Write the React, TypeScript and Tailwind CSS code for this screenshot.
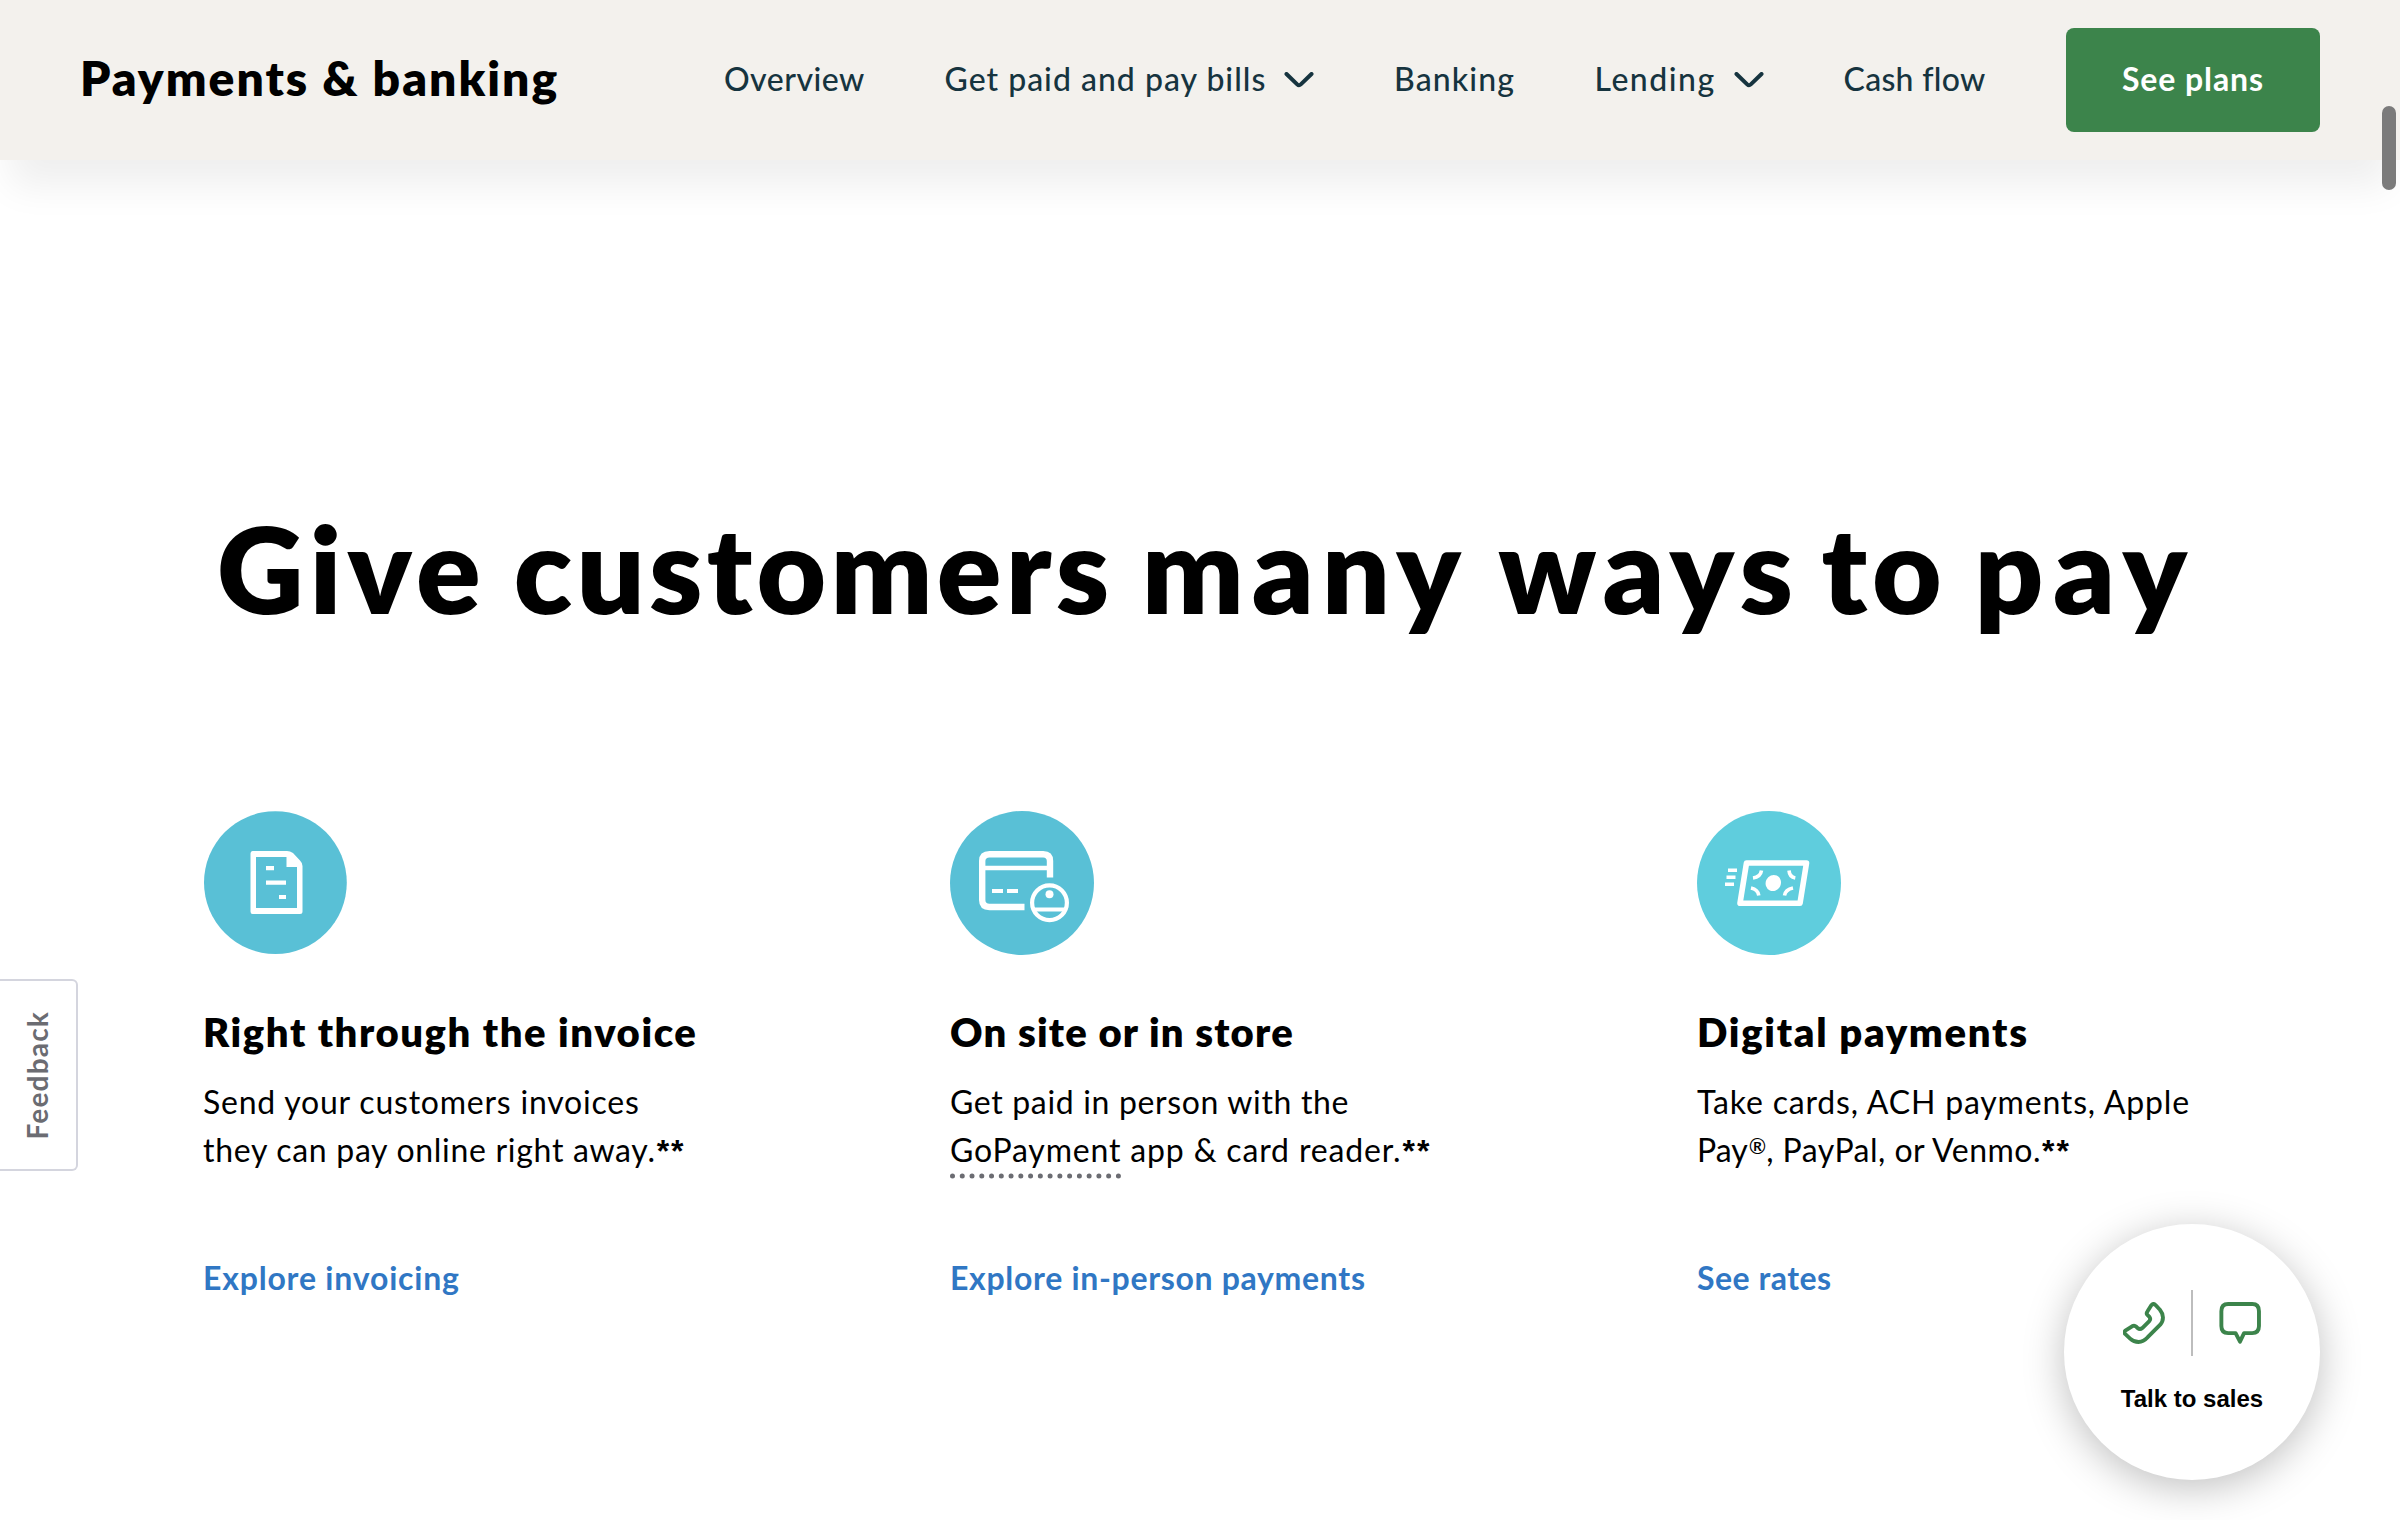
import type { ReactNode } from 'react';

function Chevron() {
  return (
    <svg className="ml-auto mt-[3px] h-4 w-[30px]" viewBox="0 0 30 16" fill="none" stroke="#16343f" strokeWidth="4" strokeLinecap="round" strokeLinejoin="round">
      <path d="M2.500 2 L13.200 12.400 Q15 14.100 16.800 12.400 L27.500 2" />
    </svg>
  );
}

function InvoiceIcon() {
  return (
    <svg className="h-36 w-36" viewBox="0 0 144 144">
      <circle cx="72.4" cy="71.6" r="71.4" fill="#59c0d6" />
      <path fill="#fff" fillRule="evenodd" d="M49 40 H84 Q87 40 90 42 L97 49.5 Q99.5 52 99.5 55 V100.500 Q99.500 103 97 103 H49.500 Q47.500 103 47.500 100.500 V42.500 Q47.500 40 49.500 40 Z M53 46 V97 H94 V56 H83.500 V46 Z" />
      <path fill="#fff" d="M63 55h8v4.200h-8z M63 69.500h20v4.200H63z M76 84h7v4h-7z" />
    </svg>
  );
}

function CardReaderIcon() {
  return (
    <svg className="h-36 w-36" viewBox="0 0 144 144" fill="none" stroke="#fff">
      <circle cx="72" cy="72" r="72" fill="#59c0d6" stroke="none" />
      <path strokeWidth="6.400" d="M100 66.500 V50 Q100 43.200 93.200 43.200 H39.500 Q32.200 43.200 32.200 50 V89 Q32.200 96 39.500 96 H74.500" />
      <path strokeWidth="4.600" d="M32 57 H98" />
      <path strokeWidth="4.200" d="M42 80 H53 M57 80 H68" />
      <circle cx="99.500" cy="91.700" r="17.400" strokeWidth="4.200" />
      <path strokeWidth="4" d="M83.500 98.500 H115.500" />
      <circle cx="99.500" cy="83.300" r="4" fill="#fff" stroke="none" />
    </svg>
  );
}

function CashIcon() {
  return (
    <svg className="h-36 w-36" viewBox="0 0 144 144" fill="none" stroke="#fff">
      <circle cx="72" cy="72" r="72" fill="#5fcddd" stroke="none" />
      <path strokeWidth="5.600" strokeLinejoin="round" d="M49.500 52 H109.500 L103 92.300 H43 Z" />
      <ellipse cx="76.300" cy="72" rx="7.600" ry="8.200" fill="#fff" stroke="none" transform="rotate(25 76.300 72)" />
      <path strokeWidth="3.600" d="M64.500 59.500 Q63.500 66 56 67 M92 59.500 Q92.500 66 98.300 67 M54 77 Q61 78.500 61.800 84.500 M96 77 Q88.500 78.500 87.500 84.500" />
      <path strokeWidth="3.600" d="M31 59.300 H40 M29.500 66.300 H38.500 M28 73.300 H37" />
    </svg>
  );
}

function Stars() {
  return <span className="ml-px font-['Liberation_Sans',sans-serif] text-[32px] leading-none font-bold tracking-[2px]">**</span>;
}

function Card({ icon, title, link, children }: { icon: ReactNode; title: ReactNode; link: ReactNode; children: ReactNode }) {
  return (
    <section className="flex w-[747px] shrink-0 flex-col whitespace-nowrap">
      {icon}
      <h3 className="mt-[53px] text-[40px] leading-[48px] font-extrabold">{title}</h3>
      <p className="mt-[22px] h-24 text-[32px] leading-[48px]">{children}</p>
      <a className="mt-20 text-[32px] leading-[48px] font-bold text-[#3077c4]">{link}</a>
    </section>
  );
}

export default function App() {
  return (
    <div className="relative h-[1520px] w-[2400px] overflow-hidden bg-white font-['Lato',sans-serif] text-black">
      <header className="flex h-40 items-center bg-[#f3f1ed] shadow-[0_36px_36px_-10px_rgba(0,0,0,0.065)]">
        <div className="w-[724px] pb-[5px] pl-[80px] text-[48px] leading-[58px] font-extrabold tracking-[2px]">Payments &amp; banking</div>
        <nav className="flex items-center gap-20 pb-[3px] text-[32px] leading-10 font-medium whitespace-nowrap text-[#16343f]">
          <a className="w-[140.5px] tracking-[0.49px]">Overview</a>
          <a className="flex w-[369.5px] items-center tracking-[1px]">Get paid and pay bills<Chevron /></a>
          <a className="w-[120.5px] tracking-[1.1px]">Banking</a>
          <a className="flex w-[169px] items-center tracking-[1.5px]">Lending<Chevron /></a>
          <a className="w-[142.5px] tracking-[0.3px]">Cash flow</a>
        </nav>
        <a className="ml-20 flex h-[104px] w-[254px] items-center justify-center rounded-lg bg-[#3c844b] pb-[3px] text-[32px] leading-10 font-bold tracking-[0.9px] text-white">See plans</a>
      </header>

      <main className="pt-[336px]">
        <h1 className="pl-[217px] text-[120px] leading-[144px] font-extrabold tracking-[4.95px] whitespace-nowrap">
          <span className="tracking-[5.9px]">Give</span>{' '}
          <span className="-ml-[5.5px] tracking-[4.25px]">customers</span>{' '}
          <span className="-ml-[4.5px] tracking-[7.9px]">many</span>{' '}
          <span className="-ml-[3px] tracking-[6.9px]">ways</span>{' '}
          <span className="-ml-[11px]">to</span>{' '}
          <span className="-ml-[4.7px] tracking-[9.5px]">pay</span>
        </h1>
        <div className="mt-[171px] flex pl-[203px]">
          <Card
            icon={<InvoiceIcon />}
            title={<span className="tracking-[1.57px]">Right through the invoice</span>}
            link={<span className="tracking-[0.8px]">Explore invoicing</span>}
          >
            <span className="tracking-[0.78px]">Send your customers invoices</span><br />
            <span className="tracking-[0.7px]">they can pay online right away.</span><Stars />
          </Card>
          <Card
            icon={<CardReaderIcon />}
            title={<span className="tracking-[1.2px]">On site or in store</span>}
            link={<span className="tracking-[0.68px]">Explore in-person payments</span>}
          >
            <span className="tracking-[0.66px]">Get paid in person with the</span><br />
            <span className="relative tracking-[0.82px]">
              GoPayment
              <svg className="absolute top-[43px] left-0 h-[6px] w-[172px]" viewBox="0 0 172 6">
                <path d="M2.500 3 H172" stroke="#6b6c72" strokeWidth="5" strokeLinecap="round" strokeDasharray="0 9.760" />
              </svg>
            </span>
            <span className="tracking-[0.85px]"> app &amp; card reader.</span><Stars />
          </Card>
          <Card
            icon={<CashIcon />}
            title={<span className="tracking-[1.7px]">Digital payments</span>}
            link={<span className="tracking-[0.5px]">See rates</span>}
          >
            <span className="tracking-[0.82px]">Take cards, ACH payments, Apple</span><br />
            <span>Pay</span><span className="ml-px inline-block -translate-y-[8px] text-[21px] leading-none font-medium">®</span>
            <span className="tracking-[0.48px]">, PayPal, or Venmo.</span><Stars />
          </Card>
        </div>
      </main>

      <aside className="absolute top-[979px] left-0 flex h-[192px] w-[78px] items-center justify-center rounded-r-md border-2 border-l-0 border-[#d4d5de] bg-white">
        <span className="mr-[2px] rotate-180 text-[28px] leading-8 font-bold tracking-[1.2px] text-[#6b6c72] [writing-mode:vertical-rl]">Feedback</span>
      </aside>

      <aside className="absolute top-[1224px] left-[2064px] flex h-64 w-64 flex-col items-center rounded-full bg-white pt-[66px] shadow-[0_8px_40px_rgba(0,0,0,0.25)]">
        <div className="flex h-[66px] w-[138px] items-center justify-between">
          <svg className="h-[42px] w-[42px]" viewBox="249 306 124 124" fill="none" stroke="#3c844b" strokeWidth="11.500" strokeLinejoin="round">
            <path d="M333 315 Q339 309 345 315 L358 329 Q367 340 367 352 Q367 364 359 373 L322 410 Q309 424 295 424 Q281 424 270 414 L256 401 Q250 395 257 390 L277 377 Q283 374 288 379 L292 383 Q299 389 306 383 L326 363 Q332 357 327 350 L321 344 Q317 340 321 334 Z" />
          </svg>
          <div className="h-[66px] w-[2px] bg-[#bdbdbd]" />
          <svg className="h-[42px] w-[42px]" viewBox="539 306 124 124" fill="none" stroke="#3c844b" strokeWidth="11.500" strokeLinejoin="round">
            <path d="M566 312 H637 Q657 312 657 333 V377 Q657 398 637 398 H613 L601 423 L588 398 H566 Q546 398 546 377 V333 Q546 312 566 312 Z" />
          </svg>
        </div>
        <div className="mt-[29px] font-['Liberation_Sans',sans-serif] text-[24px] leading-[28px] font-bold">Talk to sales</div>
      </aside>

      <div className="absolute top-[106px] left-[2382px] h-[84px] w-[14px] rounded-full bg-[#7b7b7b]" />
    </div>
  );
}
